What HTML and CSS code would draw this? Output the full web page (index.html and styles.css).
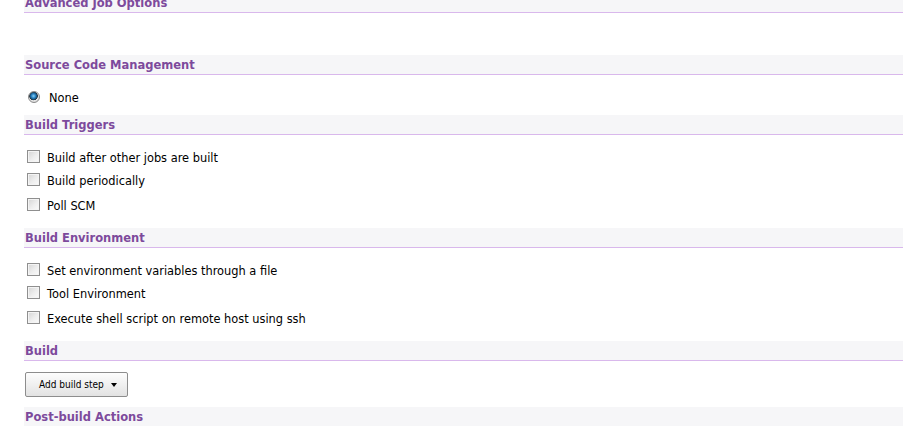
FILE: index.html
```html
<!DOCTYPE html>
<html lang="en">
<head>
  <meta charset="UTF-8">
  <title>Job configuration</title>
  <link rel="stylesheet" href="styles.css">
</head>
<body>
  <div class="config">
    <div class="section-header">Advanced Job Options</div>
    <div class="section-body empty"></div>

    <div class="section-header">Source Code Management</div>
    <div class="section-body scm">
      <label class="row"><input type="radio" name="scm" checked> None</label>
    </div>

    <div class="section-header">Build Triggers</div>
    <div class="section-body">
      <label class="row"><input type="checkbox"> Build after other jobs are built</label>
      <label class="row"><input type="checkbox"> Build periodically</label>
      <label class="row last"><input type="checkbox"> Poll SCM</label>
    </div>

    <div class="section-header">Build Environment</div>
    <div class="section-body">
      <label class="row"><input type="checkbox"> Set environment variables through a file</label>
      <label class="row"><input type="checkbox"> Tool Environment</label>
      <label class="row last"><input type="checkbox"> Execute shell script on remote host using ssh</label>
    </div>

    <div class="section-header">Build</div>
    <div class="section-body build">
      <button class="menu-button">Add build step <span class="arrow"></span></button>
    </div>

    <div class="section-header">Post-build Actions</div>
  </div>
</body>
</html>
```

FILE: styles.css
```css
body {
  margin: 0;
  background: #fff;
  font-family: Verdana, "DejaVu Sans", sans-serif;
  font-size: 11.4px;
  color: #000;
}

.config {
  margin-top: -7px;
  padding-left: 24px;
  overflow: hidden;
}

/* section titles */
.section-header {
  height: 18px;
  padding-top: 1px;
  padding-left: 1px;
  line-height: 19px;
  background-color: #f6f6f8;
  border-bottom: 1px solid #d9b8ec;
  color: #7d4a9c;
  font-weight: bold;
  font-size: 11.5px;
}

.section-body {
  padding: 11px 0;
}

.section-body.empty {
  height: 42px;
  padding: 0;
}

.section-body.scm {
  padding: 11px 0 6px;
}

.section-body.build {
  padding: 11px 0 10px;
}

.row {
  display: flex;
  align-items: center;
  height: 23px;
  padding-left: 3px;
}

.row.last {
  margin-top: 2px;
}

/* checkbox look */
input[type="checkbox"] {
  appearance: none;
  width: 13px;
  height: 13px;
  margin: 0 7px 2px 0;
  border: 1px solid #8f8f8f;
  background: linear-gradient(135deg, #d4d4d4 0%, #eeeeee 55%, #fbfbfb 100%);
  box-shadow: inset 0 0 0 1px #f4f4f4;
}

/* radio look */
input[type="radio"] {
  appearance: none;
  width: 12px;
  height: 12px;
  margin: 0 9px 2px 1px;
  border-radius: 50%;
  border: 1px solid #8a8a8a;
  background: radial-gradient(circle at 45% 40%, #8fd0f5 0, #2a86c4 2px, #1a5f94 3px, #23343f 4px, #e6e6e6 4.6px, #cfcfcf 100%);
}

/* button */
.menu-button {
  display: flex;
  align-items: center;
  width: 103px;
  height: 25px;
  margin-left: 1px;
  padding: 0 0 0 13px;
  border: 1px solid #8d8d8d;
  border-radius: 2px;
  background: linear-gradient(#fdfdfd, #f0f0f0 50%, #e2e2e2);
  font-family: Tahoma, "DejaVu Sans Condensed", sans-serif;
  font-size: 10px;
  color: #000;
  cursor: pointer;
}

.arrow {
  width: 0;
  height: 0;
  margin-left: 7px;
  border-left: 3.5px solid transparent;
  border-right: 3.5px solid transparent;
  border-top: 4px solid #000;
}
```
